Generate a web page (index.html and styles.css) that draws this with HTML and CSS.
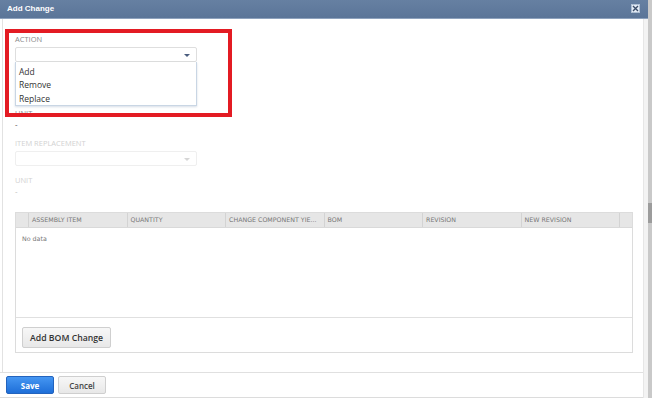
FILE: index.html
```html
<!DOCTYPE html>
<html lang="en">
<head>
    <meta charset="UTF-8">
    <title>Add Change</title>
    <link rel="stylesheet" href="styles.css">
</head>
<body>

<div class="screen">
    <div class="dialog">
        <div class="titlebar">
            <span class="title">Add Change</span>
            <button type="button" class="close-btn" title="Close">
                <svg width="7" height="7" viewBox="0 0 7 7"><path d="M1 1 L6 6 M6 1 L1 6" stroke="#3b4d69" stroke-width="1.4"/></svg>
            </button>
        </div>

        <div class="dialog-main">
            <div class="dialog-body">
                <!-- open dropdown covers the item field below it -->
                <div class="field field-action">
                    <label class="field-label">Action</label>
                    <div class="select"><span class="arrow"></span></div>
                    <ul class="dropdown">
                        <li>Add</li>
                        <li>Remove</li>
                        <li>Replace</li>
                    </ul>
                </div>

                <div class="field">
                    <label class="field-label">Unit</label>
                    <div class="field-value">-</div>
                </div>

                <div class="field disabled">
                    <label class="field-label">Item Replacement</label>
                    <div class="select"><span class="arrow"></span></div>
                </div>

                <div class="field disabled">
                    <label class="field-label">Unit</label>
                    <div class="field-value">-</div>
                </div>

                <div class="grid">
                    <div class="grid-head">
                        <div class="col"></div>
                        <div class="col">Assembly Item</div>
                        <div class="col">Quantity</div>
                        <div class="col">Change Component Yie...</div>
                        <div class="col">BOM</div>
                        <div class="col">Revision</div>
                        <div class="col">New Revision</div>
                        <div class="col col-filler"></div>
                    </div>
                    <div class="grid-body">No data</div>
                    <div class="grid-toolbar">
                        <button type="button" class="btn">Add BOM Change</button>
                    </div>
                </div>
            </div>

            <div class="dialog-footer">
                <button type="button" class="btn btn-primary">Save</button>
                <button type="button" class="btn btn-small">Cancel</button>
            </div>
        </div>
    </div>

    <div class="scrollbar"><div class="thumb"></div></div>

    <!-- annotation box drawn over the action field -->
    <div class="highlight"></div>
</div>

</body>
</html>
```

FILE: styles.css
```css
/* Page */
body {
    margin: 0; background: #fff;
    font-family: "Open Sans", sans-serif; color: #333;
}
.screen {
    position: relative; display: flex;
    width: 652px; height: 398px; overflow: hidden;
}

/* Dialog window */
.dialog { width: 648px; display: flex; flex-direction: column; background: #f3f3f3; }
.titlebar {
    height: 20px; display: flex; align-items: center; justify-content: space-between;
    padding: 0 8px 0 7px; box-sizing: border-box;
    background: linear-gradient(#6680a2, #5b7598);
    border-bottom: 1px solid #8ea2bd;
}
.title {
    color: #fff; font-family: "Liberation Sans", sans-serif;
    font-weight: bold; font-size: 8px;
}
.close-btn {
    width: 9px; height: 9px; padding: 0; margin-top: -1px;
    display: flex; align-items: center; justify-content: center;
    background: #e4ecf6; border: 1px solid #aebfd4; cursor: pointer;
}

.dialog-main { width: 644px; background: #fff; border-right: 1px solid #e6e6e6; box-sizing: border-box; }
.dialog-body {
    margin-left: 2px; border-left: 1px solid #e2e2e2;
    padding: 15px 10px 19px 12px;
}

/* Form fields */
.field { position: relative; margin-bottom: 9px; width: 182px; }
.field-action { margin-bottom: 46px; }
.field-label {
    display: block; height: 10px; line-height: 10px; margin-bottom: 3px;
    font-size: 7.5px; color: #8a8a8a; text-transform: uppercase;
}
.field-value { font-size: 8px; line-height: 10px; margin-top: -2px; color: #444; }
.select {
    position: relative; height: 15px; box-sizing: border-box;
    border: 1px solid #dedede; border-radius: 2px; background: #fff;
}
.arrow {
    position: absolute; right: 6px; top: 6px;
    border-left: 3px solid transparent; border-right: 3px solid transparent;
    border-top: 3px solid #4a5d7e;
}
.disabled .field-label { color: #d2d2d2; }
.disabled .field-value { color: #bbb; }
.disabled .select { border-color: #efefef; }
.disabled .arrow { border-top-color: #d6d6d6; }

.dropdown {
    position: absolute; left: 0; right: 0; top: 28px; z-index: 2;
    margin: 0; padding: 3px 0 0; list-style: none;
    background: #fff; border: 1px solid #c9d6e4; border-top: none;
    box-shadow: 0 1px 2px rgba(90,120,160,0.25);
}
.dropdown li { height: 13.5px; line-height: 13.5px; padding-left: 3px; font-size: 8.5px; color: #333; }

/* Grid */
.grid { margin-top: 16px; width: 618px; border: 1px solid #dcdcdc; box-sizing: border-box; }
.grid-head {
    display: grid; grid-template-columns: 13px repeat(6, 1fr) 12px;
    height: 14px; background: #e6e6e6; border-bottom: 1px solid #d9d9d9;
}
.grid-head .col {
    border-right: 1px solid #d3d3d3; padding-left: 3px;
    font-family: "DejaVu Sans", sans-serif; font-size: 6.3px; line-height: 14px;
    color: #777; text-transform: uppercase; white-space: nowrap; overflow: hidden;
}
.grid-head .col-filler { border-right: none; }
.grid-body {
    height: 89px; padding: 6px 6px 0; box-sizing: border-box;
    font-family: "DejaVu Sans", sans-serif; font-size: 6.3px; line-height: 10px; color: #777;
}
.grid-toolbar { border-top: 1px solid #e0e0e0; padding: 6px 6px 4px; }

/* Buttons */
.btn {
    height: 21px; padding: 0 7px; cursor: pointer;
    font-family: "Open Sans", sans-serif; font-size: 8.7px; font-weight: 600; color: #333;
    background: linear-gradient(#f7f7f7, #e8e8e8);
    border: 1px solid #cfcfcf; border-radius: 2px;
}
.dialog-footer {
    display: flex; gap: 4px; padding: 3px 6px 3px;
    border-top: 1px solid #e0e0e0; border-bottom: 1px solid #dcdcdc;
}
.btn-small { width: 48px; height: 18px; padding: 0; font-size: 8px; color: #444; }
.btn-primary {
    width: 48px; height: 18px; padding: 0; font-size: 8px; font-weight: bold;
    color: #fff; background: linear-gradient(#4596f2, #1e6ed8); border-color: #2363bd;
}

/* Window scrollbar */
.scrollbar { width: 4px; background: #c9c9c9; position: relative; }
.thumb { position: absolute; left: 0; right: 0; top: 203px; height: 20px; background: #9c9c9c; }

/* Red annotation */
.highlight {
    position: absolute; left: 5px; top: 29px; width: 227px; height: 88px;
    border: 4px solid #e31b23; box-sizing: border-box; z-index: 3;
}
```
